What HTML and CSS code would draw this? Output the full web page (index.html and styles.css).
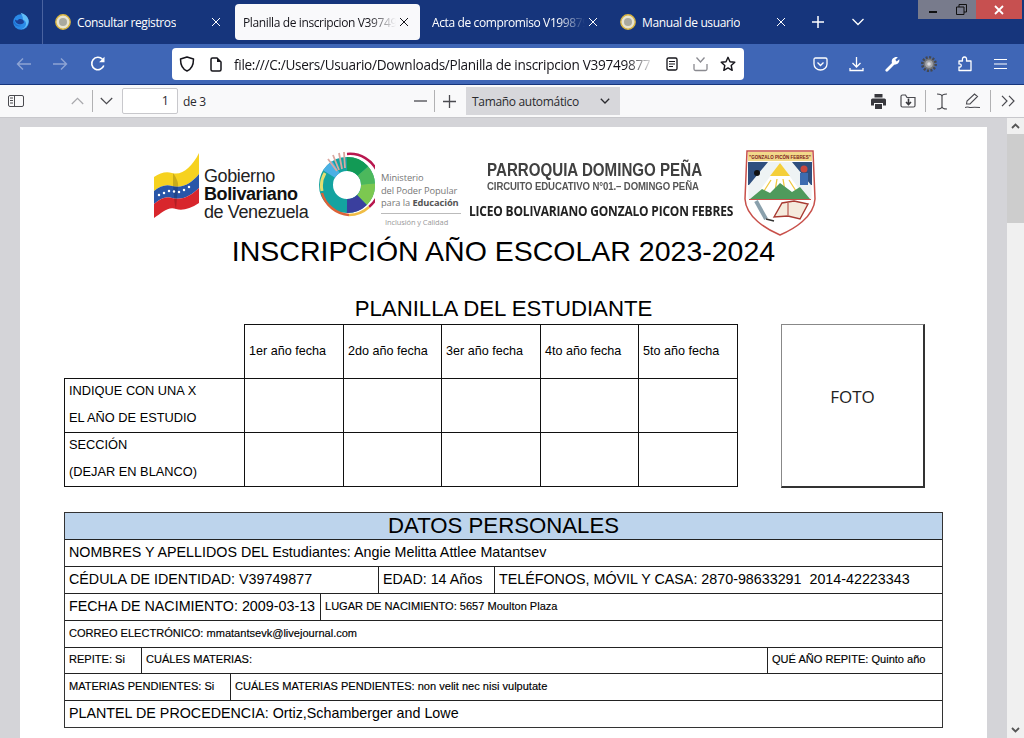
FILE: index.html
```html
<!DOCTYPE html>
<html lang="es">
<head>
<meta charset="utf-8">
<title>Planilla de inscripcion</title>
<link rel="stylesheet" href="styles.css">
</head>
<body>
<div class="tabstrip">
  <div class="brand">
    <svg width="18" height="18" viewBox="0 0 18 18"><circle cx="9" cy="10" r="7.800" fill="#2a8ae8"/><path d="M8.500 .8c4 1 7 3.500 8 7 .8 4.500-3 9.500-8 9.500 3.500-.5 5.500-3 5.500-5.500 0-2-1.500-3.700-3.200-4.300.5-2.300-1-4.700-2.300-6.700z" fill="#62bdf7"/><path d="M3 7.500c0 3 2.500 5 5.800 4.800 1.700-.1 2.900-1 3.200-2.300-.5-1.700-1.800-2.800-3.500-2.900-1.500-.1-2.500.5-3 1.500-.9 0-1.800-.4-2.500-1.100z" fill="#1b3f96"/><path d="M1.800 8c1 4.500 4.500 6.300 8 5.500-4 2.500-9 0-8-5.500z" fill="#1f6fd0"/></svg>
  </div>
  <div class="tab tab-first">
    <svg class="favicon" width="16" height="16" viewBox="0 0 16 16"><circle cx="8" cy="8" r="7.200" fill="#e8e4d0" stroke="#d8b440" stroke-width="1.400"/><circle cx="8" cy="8" r="4" fill="#a9a99f"/></svg>
    <span class="tab-title">Consultar registros</span>
    <svg class="close" width="10" height="10" viewBox="0 0 10 10"><path d="M1 1l8 8M9 1l-8 8" stroke="#fff" stroke-width="1"/></svg>
  </div>
  <div class="tab tab-active">
    <span class="tab-title tab-fade">Planilla de inscripcion V39749877</span>
    <svg class="close" width="10" height="10" viewBox="0 0 10 10"><path d="M1 1l8 8M9 1l-8 8" stroke="#15141a" stroke-width="1"/></svg>
  </div>
  <div class="tab">
    <span class="tab-title tab-fade">Acta de compromiso V19987988</span>
    <svg class="close" width="10" height="10" viewBox="0 0 10 10"><path d="M1 1l8 8M9 1l-8 8" stroke="#fff" stroke-width="1"/></svg>
  </div>
  <div class="tab">
    <svg class="favicon" width="16" height="16" viewBox="0 0 16 16"><circle cx="8" cy="8" r="7.200" fill="#e8e4d0" stroke="#d8b440" stroke-width="1.400"/><circle cx="8" cy="8" r="4" fill="#a9a99f"/></svg>
    <span class="tab-title">Manual de usuario</span>
    <svg class="close" width="10" height="10" viewBox="0 0 10 10"><path d="M1 1l8 8M9 1l-8 8" stroke="#fff" stroke-width="1"/></svg>
  </div>
  <div class="strip-btn strip-plus"><svg width="14" height="14" viewBox="0 0 14 14"><path d="M7 1v12M1 7h12" stroke="#fff" stroke-width="1.500"/></svg></div>
  <div class="strip-btn strip-more"><svg width="14" height="10" viewBox="0 0 14 10"><path d="M1.500 2l5.500 5.500L12.500 2" fill="none" stroke="#fff" stroke-width="1.300"/></svg></div>
  <div class="winctl">
    <div class="win win-min"><span class="min-bar"></span></div>
    <div class="win win-max"><svg width="11" height="11" viewBox="0 0 11 11"><path d="M.5 3h7.500v7.500H.5zM3 3V.5h7.500V8H8" fill="none" stroke="#111" stroke-width="1"/></svg></div>
    <div class="win win-close"><svg width="10" height="10" viewBox="0 0 10 10"><path d="M1 1l8 8M9 1l-8 8" stroke="#fff" stroke-width="1.800"/></svg></div>
  </div>
</div>

<div class="navbar">
  <svg class="nav-back" width="16" height="14" viewBox="0 0 16 14"><path d="M15 7H1.500M7 1.500L1.500 7 7 12.500" fill="none" stroke="#8ea4d4" stroke-width="1.400"/></svg>
  <svg class="nav-fwd" width="16" height="14" viewBox="0 0 16 14"><path d="M1 7h13.500M9 1.500L14.500 7 9 12.500" fill="none" stroke="#8ea4d4" stroke-width="1.400"/></svg>
  <svg class="nav-reload" width="16" height="16" viewBox="0 0 16 16"><path d="M13.800 9.500A6.200 6.200 0 1 1 12.500 3.300" fill="none" stroke="#fff" stroke-width="1.600"/><path d="M14.500.8v5.400H9.100z" fill="#fff"/></svg>
  <div class="urlbar">
    <svg class="url-shield" width="16" height="16" viewBox="0 0 16 16"><path d="M8 1l6.500 2c0 6-1.500 10-6.500 12C3 13 1.500 9 1.500 3z" fill="none" stroke="#15141a" stroke-width="1.500" stroke-linejoin="round"/></svg>
    <svg class="url-page" width="12" height="15" viewBox="0 0 12 15"><path d="M1 2.500Q1 1 2.500 1H7l4 4v7.500Q11 14 9.500 14h-7Q1 14 1 12.500z" fill="none" stroke="#15141a" stroke-width="1.500"/><path d="M7 1v4h4z" fill="#15141a"/></svg>
    <span class="url-text">file:///C:/Users/Usuario/Downloads/Planilla de inscripcion V39749877</span>
    <svg class="url-reader" width="12" height="14" viewBox="0 0 12 14"><rect x="1" y="1" width="10" height="12" rx="1.500" fill="none" stroke="#15141a" stroke-width="1.300"/><path d="M3 4.500h6M3 7h6M3 9.500h4" stroke="#15141a" stroke-width="1.100"/></svg>
    <svg class="url-save" width="15" height="16" viewBox="0 0 15 16"><path d="M1 8v5q0 1.500 1.500 1.500h10Q14 14.500 14 13V8" fill="none" stroke="#8a8a90" stroke-width="1.300"/><path d="M3.500 1.500L7.500 6l4-4.500" fill="none" stroke="#8a8a90" stroke-width="1.300"/></svg>
    <svg class="url-star" width="16" height="16" viewBox="0 0 16 16"><path d="M8 1.300l2 4.500 4.800.5-3.600 3.200 1 4.800L8 11.900l-4.200 2.400 1-4.800L1.200 6.300 6 5.800z" fill="none" stroke="#15141a" stroke-width="1.400" stroke-linejoin="round"/></svg>
  </div>
  <svg class="act act-first" width="15" height="14" viewBox="0 0 15 14"><path d="M1 2.500Q1 1 2.500 1h10Q14 1 14 2.500V7a6.500 6 0 0 1-13 0z" fill="none" stroke="#fff" stroke-width="1.300"/><path d="M4.500 5.500l3 3 3-3" fill="none" stroke="#fff" stroke-width="1.300"/></svg>
  <svg class="act" width="15" height="16" viewBox="0 0 15 16"><path d="M7.500 1v10M3.500 7l4 4 4-4M1 12v2.500h13V12" fill="none" stroke="#fff" stroke-width="1.300"/></svg>
  <svg class="act" width="15" height="16" viewBox="0 0 15 16"><path d="M1.800 14.200L8.500 7.500" stroke="#fff" stroke-width="2.800" stroke-linecap="round"/><path d="M6.800 6.500C6.300 3 9 .5 12.800 1.200L10.300 3.800l1.400 1.700 2.600-2.300c.6 3.700-2.500 6-6 5z" fill="#fff"/></svg>
  <svg class="act" width="16" height="16" viewBox="0 0 16 16"><circle cx="8" cy="8" r="6" fill="#70737a"/><circle cx="8" cy="8" r="6.700" fill="none" stroke="#45484f" stroke-width="2.600" stroke-dasharray="2 1.500"/><circle cx="8" cy="8" r="3.800" fill="#a5a7ac"/><circle cx="8" cy="8" r="1.800" fill="#dcdce0"/></svg>
  <svg class="act" width="15" height="16" viewBox="0 0 15 16"><path d="M1 5h3.500C4 2 5 1 6.500 1S9 2 8.500 5H13v9.500H1V11c3 .5 3-3.500 0-3z" fill="none" stroke="#fff" stroke-width="1.300" stroke-linejoin="round"/></svg>
  <svg class="act" width="13" height="12" viewBox="0 0 13 12"><path d="M0 1.500h13M0 6h13M0 10.500h13" stroke="#fff" stroke-width="1.200"/></svg>
</div>

<div class="pdfbar">
  <svg class="pdf-sidebar" width="16" height="12" viewBox="0 0 16 12"><rect x=".5" y=".5" width="15" height="11" rx="1.500" fill="none" stroke="#4a4a4f"/><path d="M6.500 .5v11M2 3h3M2 5.500h3M2 8h3" stroke="#4a4a4f"/></svg>
  <svg class="pdf-up" width="13" height="8" viewBox="0 0 13 8"><path d="M.8 7l5.700-5.700L12.200 7" fill="none" stroke="#a8a8ac" stroke-width="1.200"/></svg>
  <span class="pdf-sep pdf-sep-nav"></span>
  <svg class="pdf-down" width="13" height="8" viewBox="0 0 13 8"><path d="M.8 1l5.700 5.700L12.200 1" fill="none" stroke="#4a4a4f" stroke-width="1.200"/></svg>
  <div class="pagebox">1</div>
  <span class="pagecount">de 3</span>
  <svg class="pdf-minus" width="13" height="2" viewBox="0 0 13 2"><path d="M0 1h13" stroke="#4a4a4f" stroke-width="1.300"/></svg>
  <span class="pdf-sep pdf-sep-zoom"></span>
  <svg class="pdf-plus" width="13" height="13" viewBox="0 0 13 13"><path d="M0 6.500h13M6.500 0v13" stroke="#4a4a4f" stroke-width="1.300"/></svg>
  <div class="zoomsel"><span>Tamaño automático</span><svg width="10" height="6" viewBox="0 0 10 6"><path d="M.8 .8L5 5 9.200 .8" fill="none" stroke="#2a2a2e" stroke-width="1.300"/></svg></div>
  <svg class="pdf-print" width="15" height="15" viewBox="0 0 15 15"><path d="M3.500 0h8v3.500h-8zM1.500 4.500h12Q15 4.500 15 6v5.500h-3V9H3v2.500H0V6q0-1.500 1.500-1.500zM4 10h7v5H4z" fill="#38383d"/></svg>
  <svg class="pdf-save" width="16" height="14" viewBox="0 0 16 14"><path d="M1 3v8.500Q1 13 2.500 13h11Q15 13 15 11.500V3.500H7L5.500 1h-3Q1 1 1 2.500z" fill="none" stroke="#4a4a4f" stroke-width="1.200"/><path d="M8.500 4.500v5.500M6 8l2.500 2.500L11 8" fill="none" stroke="#38383d" stroke-width="1.600"/></svg>
  <span class="pdf-sep pdf-sep-tools"></span>
  <svg class="pdf-ibeam" width="12" height="17" viewBox="0 0 12 17"><path d="M1 1c3 0 5 .5 5 2.500v10C6 15.500 4 16 1 16M11 1C8 1 6 1.500 6 3.500v10c0 2 2 2.500 5 2.500" fill="none" stroke="#4a4a4f" stroke-width="1.200"/></svg>
  <svg class="pdf-pen" width="15" height="16" viewBox="0 0 15 16"><path d="M1.500 11l.5-3L9.500 1l3 2.500L5 11zM0 14.500c3-1.500 4 .5 6 0s4-.5 9 0" fill="none" stroke="#4a4a4f" stroke-width="1.100"/></svg>
  <span class="pdf-sep pdf-sep-more"></span>
  <svg class="pdf-more" width="14" height="12" viewBox="0 0 14 12"><path d="M1 .8L6 6 1 11.200M8 .8L13 6 8 11.200" fill="none" stroke="#4a4a4f" stroke-width="1.200"/></svg>
</div>

<div class="viewer">
  <div class="pagearea">
    <div class="page">
      <div class="letterhead">
        <div class="lh-gob">
          <svg class="flag" width="45" height="67" viewBox="0 0 45 67">
            <path d="M0 24C6 20 12 18 18 20 28 23 38 14 45 0V21C38 30 28 36 18 33 12 31 6 33 0 38Z" fill="#f6d21f"/>
            <path d="M0 38C6 33 12 31 18 33 28 36 38 30 45 21V35C38 42 28 48 18 45 12 43 6 46 0 51Z" fill="#2956a8"/>
            <path d="M0 51C6 46 12 43 18 45 28 48 38 42 45 35V50C36 56 28 58 22 56 14 53 8 60 0 65Z" fill="#d8262c"/>
            <path d="M19 20C22 24 25 30 24 34L22 56C20 50 20 40 19 33Z" fill="#000" opacity=".18"/>
            <path d="M5 42l0 .1M10 40l0 .1M15 38l0 .1M20 38.500l0 .1M25 39l0 .1M30 37l0 .1M35 34l0 .1" stroke="#fff" stroke-width="2.500" stroke-linecap="round"/>
          </svg>
          <div class="gob-text"><span>Gobierno</span><b>Bolivariano</b><span>de Venezuela</span></div>
        </div>
        <div class="lh-min">
          <svg class="ring" width="56" height="66" viewBox="0 0 56 66">
            <g fill="none">
              <circle cx="28" cy="34" r="21" stroke="#14a3a0" stroke-width="14"/>
              <path d="M28 13A21 21 0 0 1 44 20" stroke="#129a55" stroke-width="14"/>
              <path d="M44 20A21 21 0 0 1 49 33" stroke="#4cb85c" stroke-width="14"/>
              <path d="M49 33A21 21 0 0 1 43 49" stroke="#7cc850" stroke-width="14"/>
              <path d="M43 49A21 21 0 0 1 28 55" stroke="#3a3f9e" stroke-width="14"/>
              <path d="M10 23A21 21 0 0 1 17 16" stroke="#4bb0e4" stroke-width="14"/>
              <path d="M6 22A25 25 0 0 0 3 40" stroke="#e6df70" stroke-width="3"/>
              <path d="M28 3A30 30 0 0 1 50 56" stroke="#b8174e" stroke-width="2.500"/>
              <path d="M50 56A30 30 0 0 1 30 64" stroke="#f0bd45" stroke-width="2.500"/>
              <path d="M30 64A30 30 0 0 1 3 42" stroke="#dc6238" stroke-width="2.500"/>
              <path d="M26 17L25 1M23 18L20 2M20 19L14 4M18 20L9 8" stroke="#d9a8a0" stroke-width="1.800"/>
            </g>
          </svg>
          <div class="min-text"><span>Ministerio</span><span>del Poder Popular</span><span>para la <b>Educación</b></span><i class="min-rule"></i><small>Inclusión y Calidad</small></div>
        </div>
        <div class="lh-school">
          <div class="sch-1">PARROQUIA DOMINGO PEÑA</div>
          <div class="sch-2">CIRCUITO EDUCATIVO N°01.– DOMINGO PEÑA</div>
          <div class="sch-3">LICEO BOLIVARIANO GONZALO PICON FEBRES</div>
        </div>
        <svg class="shield" width="72" height="87" viewBox="0 0 72 87">
          <path d="M3 2H69L71 50C70 68 50 80 36 86 22 80 2 68 1 50Z" fill="#fff" stroke="#c8504a" stroke-width="1.500"/>
          <path d="M4 3H68L68 12 4 12Z" fill="#f2d98a"/>
          <text x="36" y="10" class="shield-text">"GONZALO PICÓN FEBRES"</text>
          <path d="M4 13H68L67.500 50H4.500Z" fill="#eef3f4"/>
          <path d="M4 13H24L5 36H4ZM48 13H68V36H67Z" fill="#2f4f7e"/>
          <circle cx="13" cy="24" r="3" fill="#111"/>
          <path d="M56 24h8v12h-8z" fill="#3d6cb0"/><circle cx="60" cy="20" r="3.500" fill="#c9483e"/>
          <path d="M36 14L58 44H14Z" fill="#fff"/>
          <path d="M36 14L46 27H26Z" fill="#f4cf3a"/>
          <path d="M27 31L20 42M33 30L31 42M39 30L41 42M45 31L52 42" stroke="#f0c840" stroke-width="1.300"/>
          <path d="M6 50L18 40 26 44 36 34 48 43 56 38 66 50Z" fill="#4f9a5c"/>
          <path d="M5 51H67C66 66 50 76 36 84 22 76 6 66 5 51Z" fill="#fff"/>
          <path d="M5 50.500H67" stroke="#c8504a"/>
          <path d="M30 68L38 54 50 52 64 55 56 70 44 67Z" fill="#f5ebdd" stroke="#a83a32" stroke-width="1.400"/>
          <path d="M44 54L44 66" stroke="#a83a32"/>
          <path d="M12 52L22 70" stroke="#8aa0ac" stroke-width="4"/>
          <path d="M22 70L30 72" stroke="#333" stroke-width="1.500"/>
        </svg>
      </div>
      <h1 class="title">INSCRIPCIÓN AÑO ESCOLAR 2023-2024</h1>
      <h2 class="subtitle">PLANILLA DEL ESTUDIANTE</h2>
      <div class="years">
        <table class="ytable">
          <colgroup><col class="c0"><col class="c1"><col class="c2"><col class="c1"><col class="c2"><col class="c1"></colgroup>
          <tr><td class="blank"></td><th>1er año fecha</th><th>2do año fecha</th><th>3er año fecha</th><th>4to año fecha</th><th>5to año fecha</th></tr>
          <tr><td class="lbl"><div class="lbl-in">INDIQUE CON UNA X<br>EL AÑO DE ESTUDIO</div></td><td></td><td></td><td></td><td></td><td></td></tr>
          <tr><td class="lbl"><div class="lbl-in">SECCIÓN<br>(DEJAR EN BLANCO)</div></td><td></td><td></td><td></td><td></td><td></td></tr>
        </table>
        <div class="photo">FOTO</div>
      </div>
      <div class="datos">
        <div class="dhead">DATOS PERSONALES</div>
        <div class="drow"><div class="dcell big grow">NOMBRES Y APELLIDOS DEL Estudiantes: Angie Melitta Attlee Matantsev</div></div>
        <div class="drow"><div class="dcell big w-ced">CÉDULA DE IDENTIDAD: V39749877</div><div class="dcell big w-edad">EDAD: 14 Años</div><div class="dcell big grow">TELÉFONOS, MÓVIL Y CASA: 2870-98633291&nbsp; 2014-42223343</div></div>
        <div class="drow"><div class="dcell big w-fec">FECHA DE NACIMIENTO: 2009-03-13</div><div class="dcell small grow">LUGAR DE NACIMIENTO: 5657 Moulton Plaza</div></div>
        <div class="drow"><div class="dcell small grow">CORREO ELECTRÓNICO: mmatantsevk@livejournal.com</div></div>
        <div class="drow drow-short"><div class="dcell small w-rep">REPITE: Si</div><div class="dcell small w-cual">CUÁLES MATERIAS:</div><div class="dcell small grow">QUÉ AÑO REPITE: Quinto año</div></div>
        <div class="drow"><div class="dcell small w-mat">MATERIAS PENDIENTES: Si</div><div class="dcell small grow">CUÁLES MATERIAS PENDIENTES: non velit nec nisi vulputate</div></div>
        <div class="drow"><div class="dcell big grow">PLANTEL DE PROCEDENCIA: Ortiz,Schamberger and Lowe</div></div>
      </div>
    </div>
  </div>
  <div class="scrollbar">
    <div class="sb-btn"><svg width="9" height="6" viewBox="0 0 9 6"><path d="M1 5l3.500-3.500L8 5" fill="none" stroke="#555" stroke-width="1.800"/></svg></div>
    <div class="sb-thumb"></div>
    <div class="sb-track"></div>
    <div class="sb-btn"><svg width="9" height="6" viewBox="0 0 9 6"><path d="M1 1l3.500 3.500L8 1" fill="none" stroke="#555" stroke-width="1.800"/></svg></div>
  </div>
</div>
</body>
</html>
```
FILE: styles.css
```css
* { box-sizing: border-box; }
html, body { margin: 0; padding: 0; height: 738px; overflow: hidden; }
body { display: flex; flex-direction: column; font-family: "Open Sans", "Liberation Sans", sans-serif; background: #d4d4d8; color: #15141a; }

/* tab strip */
.tabstrip { height: 44px; flex: none; display: flex; align-items: flex-start; background: #16357c; color: #fff; }
.brand { width: 43px; height: 44px; flex: none; border-right: 1px solid #4a63a0; display: flex; align-items: center; padding: 0 0 3px 12px; margin-right: 4px; }
.tab { width: 185px; height: 36px; margin: 4px 3px 0 0; flex: none; padding-left: 8px; display: flex; align-items: center; position: relative; border-radius: 4px; font-size: 12px; }
.tab-active { background: #f9f9fb; color: #15141a; margin-right: 4px; }
.favicon { flex: none; margin-right: 6px; }
.tab-title { white-space: nowrap; overflow: hidden; letter-spacing: -.38px; }
.tab-fade { width: 153px; -webkit-mask-image: linear-gradient(90deg, #000 82%, transparent 100%); mask-image: linear-gradient(90deg, #000 82%, transparent 100%); }
.close { position: absolute; left: 164px; top: 13px; }
.strip-btn { width: 28px; height: 36px; margin-top: 4px; display: flex; align-items: center; justify-content: center; flex: none; }
.strip-plus { margin-left: 4px; }
.strip-more { margin-left: 12px; }
.winctl { display: flex; margin-left: 46px; height: 19px; }
.win { height: 19px; display: flex; align-items: center; justify-content: center; }
.win-min { width: 29px; background: #787b8c; }
.win-max { width: 29px; background: #787b8c; }
.win-close { width: 46px; background: #c75050; }
.min-bar { width: 8px; height: 2px; background: #111; margin-top: 5px; }

/* navigation bar */
.navbar { height: 41px; flex: none; background: #3f66b6; border-bottom: 1px solid #16357c; display: flex; align-items: center; padding-left: 16px; }
.nav-fwd { margin-left: 20px; }
.nav-reload { margin-left: 22px; margin-right: 66px; }
.urlbar { width: 572px; height: 32px; flex: none; background: #fff; border-radius: 4px; display: flex; align-items: center; padding-left: 7px; color: #15141a; }
.url-page { margin-left: 15px; }
.url-text { margin-left: 12px; width: 421px; flex: none; font-size: 13.600px; letter-spacing: -.3px; white-space: nowrap; overflow: hidden; -webkit-mask-image: linear-gradient(90deg, #000 93%, transparent 100%); mask-image: linear-gradient(90deg, #000 93%, transparent 100%); }
.url-reader { margin-left: 11px; }
.url-save { margin-left: 15px; }
.url-star { margin-left: 12px; }
.act { margin-left: 21px; flex: none; }
.act-first { margin-left: 69px; }

/* pdf toolbar */
.pdfbar { height: 33px; flex: none; background: #f9f9fa; border-bottom: 1px solid #c8c8cc; display: flex; align-items: center; padding-left: 8px; color: #2a2a2e; font-size: 12px; }
.pdf-sep { width: 1px; height: 22px; background: #b1b1b3; flex: none; }
.pdf-up { margin-left: 47px; }
.pdf-sep-nav { margin-left: 8px; }
.pdf-down { margin-left: 7px; }
.pagebox { width: 56px; height: 26px; margin-left: 9px; border: 1px solid #c8c8cc; border-radius: 2px; background: #fff; text-align: right; padding-right: 8px; line-height: 24px; font-size: 12.500px; }
.pagecount { margin-left: 5px; width: 231px; flex: none; letter-spacing: -.3px; }
.pdf-sep-zoom { margin-left: 7px; }
.pdf-plus { margin-left: 8px; }
.zoomsel { width: 154px; height: 28px; margin-left: 10px; background: #d7d7db; display: flex; align-items: center; justify-content: space-between; padding: 0 10px 0 6px; letter-spacing: -.32px; flex: none; }
.pdf-print { margin-left: 251px; }
.pdf-save { margin-left: 14px; }
.pdf-sep-tools { margin-left: 9px; }
.pdf-ibeam { margin-left: 10px; }
.pdf-pen { margin-left: 17px; }
.pdf-sep-more { margin-left: 10px; }
.pdf-more { margin-left: 10px; }

/* viewer */
.viewer { flex: 1; display: flex; min-height: 0; overflow: hidden; }
.pagearea { width: 1007px; flex: none; padding: 9px 0 0 20px; overflow: hidden; }
.page { width: 967px; height: 640px; background: #fff; padding: 22px 44px 0; font-family: "Liberation Sans", Arial, sans-serif; color: #000; }
.scrollbar { width: 17px; flex: none; display: flex; flex-direction: column; background: #f0f0f0; }
.sb-btn { height: 16px; flex: none; display: flex; align-items: center; justify-content: center; }
.sb-thumb { height: 89px; flex: none; background: #cdcdcd; }
.sb-track { flex: 1; }

/* letterhead */
.letterhead { height: 87px; display: flex; align-items: flex-start; padding-left: 90px; }
.lh-gob { display: flex; width: 165px; flex: none; padding-top: 4px; }
.flag { flex: none; }
.gob-text { display: flex; flex-direction: column; margin: 14px 0 0 5px; font-size: 18px; line-height: 18px; letter-spacing: -.4px; color: #222; }
.gob-text b { color: #111; }
.lh-min { display: flex; width: 150px; flex: none; padding-top: 2px; }
.ring { flex: none; }
.min-text { display: flex; flex-direction: column; margin: 21px 0 0 6px; width: 80px; font-family: "Open Sans", sans-serif; font-size: 9.300px; line-height: 12.500px; letter-spacing: -.1px; color: #777; white-space: nowrap; }
.min-text b { color: #555; }
.min-rule { display: block; height: 1px; background: #bbb; margin: 3px 0 3px; }
.min-text small { font-size: 7.500px; line-height: 11px; color: #999; padding-left: 4px; }
.lh-school { width: 275px; flex: none; padding-top: 12px; }
.sch-1 { font-size: 18px; font-weight: 700; color: #404040; line-height: 19px; margin-left: 18px; white-space: nowrap; transform: scaleX(.84); transform-origin: left center; }
.sch-2 { font-size: 11px; font-weight: 700; color: #555; line-height: 13px; margin-left: 18px; white-space: nowrap; letter-spacing: -.1px; transform: scaleX(.87); transform-origin: left center; }
.sch-3 { font-family: "Open Sans", sans-serif; font-size: 13.300px; font-weight: 700; color: #222; line-height: 16px; margin-top: 10px; white-space: nowrap; letter-spacing: -.2px; transform: scaleX(.9); transform-origin: left center; }
.shield { flex: none; }
.shield-text { font-size: 4.500px; font-weight: 700; text-anchor: middle; fill: #7a2020; }

/* headings */
.title { margin: 0; font-weight: 400; font-size: 28.500px; line-height: 30px; text-align: center; white-space: nowrap; }
.subtitle { margin: 30px 0 0; font-weight: 400; font-size: 22.200px; line-height: 26px; text-align: center; }

/* year table */
.years { display: flex; align-items: flex-start; margin-top: 2px; }
.ytable { border-collapse: collapse; table-layout: fixed; width: 674px; flex: none; }
.c0 { width: 180px; }
.c1 { width: 99px; }
.c2 { width: 98px; }
.ytable tr { height: 54px; }
.ytable td, .ytable th { border: 1px solid #111; padding: 0 0 0 4px; font-size: 12.600px; font-weight: 400; text-align: left; white-space: nowrap; }
.ytable th { padding-bottom: 2px; }
.ytable .blank { border-width: 0 1px 1px 0; }
.ytable .lbl { font-size: 12.800px; line-height: 27px; vertical-align: top; }
.lbl-in { height: 50px; margin-top: -2px; }
.photo { width: 144px; height: 164px; margin-left: 43px; border: 1px solid #888; border-right: 2px solid #333; border-bottom: 2px solid #333; display: flex; align-items: center; justify-content: center; padding-bottom: 18px; font-family: "Open Sans", sans-serif; font-size: 17px; color: #222; flex: none; }

/* datos personales */
.datos { width: 879px; margin-top: 24px; border: 1px solid #333; }
.dhead { height: 27px; background: #bdd4ec; border-bottom: 1px solid #222; font-size: 22.200px; line-height: 26px; text-align: center; }
.drow { height: 27px; display: flex; border-bottom: 1px solid #222; }
.drow-short { height: 26px; }
.drow:last-child { border-bottom: 0; height: 26px; }
.dcell { padding: 0 0 2px 4px; display: flex; align-items: center; white-space: nowrap; border-right: 1px solid #222; flex: none; }
.grow { flex: 1; border-right: 0; }
.big { font-size: 14.300px; }
.small { font-size: 11.050px; padding-bottom: 3px; -webkit-text-stroke: .15px #000; }
.w-ced { width: 314px; }
.w-edad { width: 116px; }
.w-fec { width: 256px; }
.w-rep { width: 77px; }
.w-cual { width: 626px; }
.w-mat { width: 166px; }
```
